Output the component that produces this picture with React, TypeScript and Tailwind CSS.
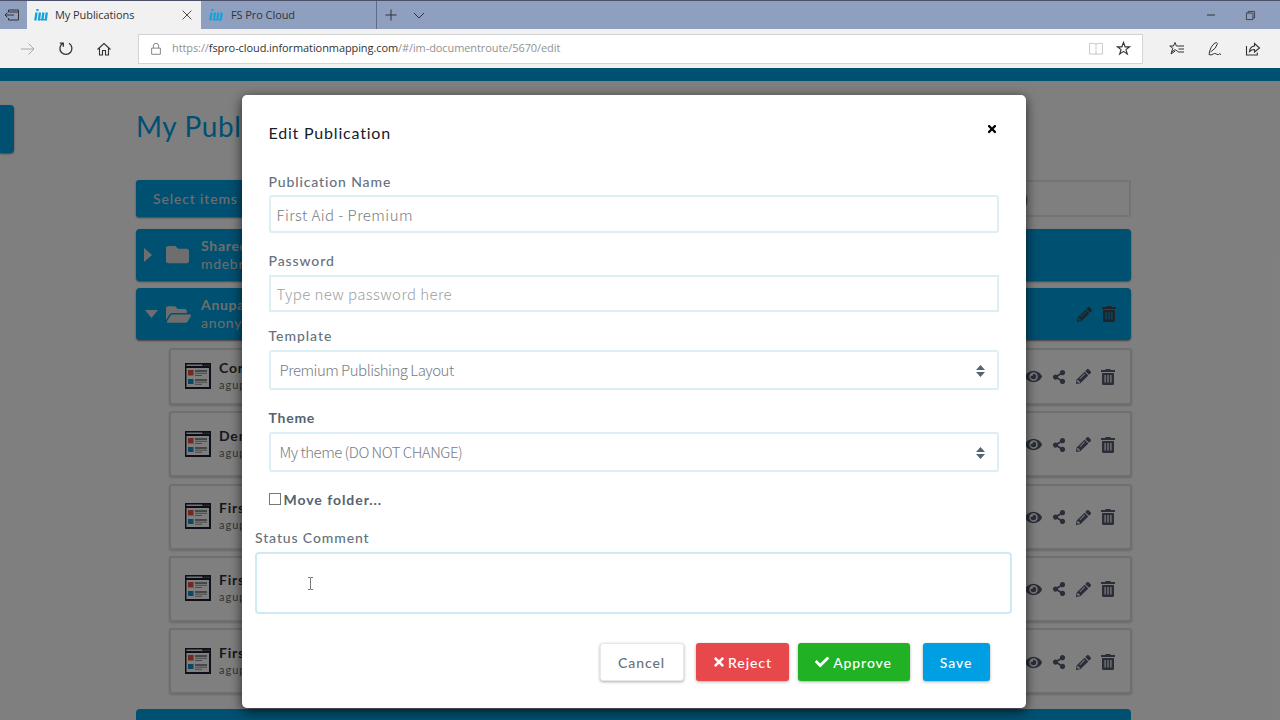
import type { ReactNode } from 'react';
import { FaCheck, FaEye, FaFolder, FaFolderOpen, FaPencilAlt, FaShareAlt, FaTimes } from 'react-icons/fa';

const documents = [
  { title: 'Corp', owner: 'agupta', box: 'h-[57px] pb-[2px]' },
  { title: 'Demo', owner: 'agupta', box: 'mt-[6px] h-[66px] pb-[1px]' },
  { title: 'First', owner: 'agupta', box: 'mt-[7px] h-[66px] pb-[2px]' },
  { title: 'First', owner: 'agupta', box: 'mt-[6px] h-[66px] pb-[2px]' },
  { title: 'First', owner: 'agupta', box: 'mt-[6px] h-[66px]' },
];

function BrandMark() {
  return (
    <svg width="14" height="12" viewBox="0 0 14 12" className="shrink-0" fill="none" stroke="#17a2dc" strokeWidth="2.300">
      <path d="M3.600 0 3.200 2" />
      <path d="M2.500 3.500 1.300 11.500M6 3.500 4.800 11.500M9.400 3.500 8.200 11.500M12.800 3.500 11.600 11.500" />
      <path d="M5 10.700h4M9 10.700h3" strokeWidth="1.300" />
    </svg>
  );
}

function Stroke({ size = 16, children, className = '' }: { size?: number; children: ReactNode; className?: string }) {
  return (
    <svg width={size} height={size} viewBox="0 0 16 16" fill="none" stroke="currentColor" strokeWidth="1" className={`shrink-0 ${className}`}>
      {children}
    </svg>
  );
}

function TrashIcon() {
  return (
    <svg width="14" height="16" viewBox="0 0 14 16" fill="currentColor">
      <path fillRule="evenodd" d="M4.500 0h5v1H14v2H0V1h4.500zM1 4h12v10.500q0 1.500-1.500 1.500h-9Q1 16 1 14.500zm2.500 2v7.500h1.200V6zm2.900 0v7.500h1.200V6zm2.900 0v7.500h1.200V6z" />
    </svg>
  );
}

function LayoutIcon() {
  return (
    <svg width="26" height="26" viewBox="0 0 26 26" className="shrink-0">
      <rect width="26" height="26" fill="#1c1f30" />
      <rect x="1.500" y="1.500" width="16" height="1.500" fill="#e8e8e8" />
      <path d="M19 2.300h1.300M21.200 2.300h1.300M23.300 2.300h1.200" stroke="#999" />
      <rect x="1.500" y="5" width="22.500" height="19" fill="#fff" />
      <rect x="3" y="7" width="5.500" height="5.500" fill="#e2553f" />
      <rect x="3" y="16" width="5.500" height="5" fill="#1593cb" />
      <path d="M10 8h12M10 17h12" stroke="#1c1f30" strokeWidth="1.200" />
      <path d="M10 10.300h12M10 12.500h7M10 19.200h12M10 21.300h7" stroke="#777" strokeWidth=".8" />
    </svg>
  );
}

function BrowserChrome() {
  return (
    <div className="h-[68px] bg-[#f1f1f1] font-['Open_Sans',sans-serif] text-[#333]">
      <div className="flex h-[29px] border-t border-[#4c5068] bg-[#8f9fbf] text-[11px] tracking-[-0.080px]">
        <div className="flex w-[27px] items-center justify-center pr-[3px]">
          <Stroke>
            <path d="M4.500 5V3h10v10h-10v-2M4.500 5h10M1 8h9M3.500 5.500 1 8l2.500 2.500" />
          </Stroke>
        </div>
        <div className="flex w-[174px] items-center bg-[#f1f1f1] pl-[7px]">
          <BrandMark />
          <span className="ml-[7px] w-[125px]">My Publications</span>
          <Stroke size={14}><path d="m3 3 10 10M13 3 3 13" /></Stroke>
        </div>
        <div className="flex w-[176px] items-center border-r border-[#606b88] pl-[8px]">
          <BrandMark />
          <span className="ml-[8px]">FS Pro Cloud</span>
        </div>
        <div className="flex flex-1 items-center pl-[6px]">
          <Stroke><path d="M8 2.500v11M2.500 8h11" /></Stroke>
          <Stroke className="ml-[12px]"><path d="m3 6 5 5 5-5" /></Stroke>
        </div>
        <div className="flex w-[77px] items-center gap-[25px]">
          <Stroke><path d="M4 8h8" /></Stroke>
          <Stroke size={13}><path d="M3 5h8v8H3zM5 5V3h8v8h-2" /></Stroke>
        </div>
      </div>
      <div className="flex h-[39px] items-center pl-[20px]">
        <Stroke className="text-[#a8a8a8]"><path d="M1 8h13M8.500 2.500 14 8l-5.500 5.500" /></Stroke>
        <Stroke className="ml-[22px]"><path strokeWidth="1.300" d="M11 2.300A6 6 0 1 1 4.500 2.500M1.800 2.200h3.500v3.500" /></Stroke>
        <Stroke className="ml-[22px]"><path strokeWidth="1.100" d="m1.500 8.500 6.500-6 6.500 6M3.500 7v7H6.500V9.500h3V14h3V7" /></Stroke>
        <div className="ml-[26px] flex h-[30px] w-[1005px] items-center border border-[#d4d4d4] bg-white pl-[10px]">
          <Stroke size={14} className="text-[#777]"><path d="M3 7h10v7H3zM5 7V4.500a3 3 0 0 1 6 0V7" /></Stroke>
          <div className="ml-[9px] w-[916px] text-[11px] tracking-[-0.090px] whitespace-nowrap text-[#929292]">
            https://<span className="text-[#333]">fspro-cloud.informationmapping.com</span>/#/im-documentroute/5670/edit
          </div>
          <Stroke className="text-[#cacaca]"><path d="M8 3v11M8 3Q5 1.500 1.500 2.500V13H8M8 3q3-1.500 6.500-.5V13H8" /></Stroke>
          <Stroke size={15} className="ml-[12px]"><path strokeWidth="1.200" d="m8 1.500 1.700 4.700h4.800l-3.900 3 1.500 4.800L8 11.100 3.900 14l1.500-4.800-3.900-3h4.800z" /></Stroke>
        </div>
        <Stroke className="ml-[26px]"><path d="M9 10.500 6 8.700l-3.500 2.500 1.300-4L.8 5h3.700L6 1.500 7.400 5H15M9.500 8H15M9 11h6M2.500 11.200 2 13l4-2.800" /></Stroke>
        <Stroke className="ml-[22px]"><path d="M2 13.500q1-8 6-11.500 2-1 2.500.500-1 5-7 8.500M2 13.500l2 .5 3.500-1.500q2 0 2.500 1 1.500.500 2.500-.700l1.500.700" /></Stroke>
        <Stroke className="ml-[22px]"><path strokeWidth="1.100" d="M1.500 5v9h10.800v-2.500M4.500 10.500q.5-5 5-5.500V2.500L14.500 7l-5 4V8.500q-3 0-5 2z" /></Stroke>
      </div>
    </div>
  );
}

function PublicationsPage() {
  return (
    <div className="h-full bg-white">
      <div className="h-[13px] bg-[#00a0e3]" />
      <div className="flex">
        <div className="mt-[24px] h-[48px] w-[14px] rounded-r bg-[#00a0e3] shadow-[0_1px_2px_#888]" />
        <div className="ml-[122px] w-[996px]">
          <h1 className="mt-[25px] h-[74px] text-[28px] leading-[40px] tracking-[0.600px] text-[#00a0e3]">My Publi</h1>
          <div className="flex h-[37px]">
            <div className="flex w-[200px] items-center rounded-[3px] bg-[#00a0e3] pl-[17px] text-[14px] font-medium tracking-[0.850px] text-[#ddd] shadow-[0_1px_2px_#888]">Select items</div>
            <div className="ml-[400px] flex w-[395px] items-center justify-end rounded-[2px] border-2 border-[#e0ebf4] pr-[101px] text-[16px] text-[#777]">)</div>
          </div>
          <div className="mt-[12px] flex h-[52px] w-[995px] items-center rounded-[4px] bg-[#00a0e3] pl-[7px] text-[#ddd] shadow-[0_1px_2px_#888]">
            <svg width="10" height="14" fill="currentColor"><path d="m1 0 8 7-8 7z" /></svg>
            <FaFolder className="mb-[2px] ml-[13px]" size={23} />
            <div className="ml-[12px] text-[14px] leading-[18px] tracking-[0.700px]">
              <p className="font-bold">Shared</p>
              <p>mdebru</p>
            </div>
          </div>
          <div className="mt-[7px] flex h-[52px] w-[995px] items-center rounded-[4px] bg-[#00a0e3] pl-[8px] text-[#ddd] shadow-[0_1px_2px_#888]">
            <svg width="14" height="8" fill="currentColor"><path d="M1 0h13L7.500 8z" /></svg>
            <FaFolderOpen className="ml-[8px]" size={25} />
            <div className="ml-[10px] text-[14px] leading-[18px] tracking-[0.700px]">
              <p className="font-bold">Anupa</p>
              <p>anony</p>
            </div>
            <div className="mr-[15px] ml-auto flex items-center gap-[10px] text-[#40484e]">
              <FaPencilAlt size={15} />
              <TrashIcon />
            </div>
          </div>
          <div className="mt-[8px] ml-[33px]">
            {documents.map((doc, i) => (
              <div key={i} className={`flex items-center rounded-[3px] border-2 border-[#dedede] bg-white pl-[14px] shadow-[0_1px_2px_#ccc] ${doc.box}`}>
                <LayoutIcon />
                <div className="ml-[8px] text-[#303038]">
                  <p className="text-[14px] leading-[18px] font-bold tracking-[0.800px]">{doc.title}</p>
                  <p className="text-[11px] leading-[16px] tracking-[1px] text-[#666]">{doc.owner}</p>
                </div>
                <div className="mt-[2px] mr-[15px] ml-auto flex items-center gap-[10px] text-[#565d73]">
                  <FaEye size={17} />
                  <FaShareAlt size={14} />
                  <FaPencilAlt size={15} />
                  <TrashIcon />
                </div>
              </div>
            ))}
          </div>
          <div className="mt-[15px] h-[52px] w-[995px] rounded-[4px] bg-[#00a0e3]" />
        </div>
      </div>
    </div>
  );
}

function SelectBox({ value }: { value: string }) {
  return (
    <div className="flex h-[40px] items-center justify-between rounded-[3px] border-2 border-[#dceff6] pr-[12px] pl-[9px] font-['Noto_Sans_CJK_SC',sans-serif] text-[15px] font-light tracking-[-0.500px] text-[#777d84]">
      {value}
      <svg width="9" height="12" className="mt-[2px]" fill="#536572"><path d="M4.500 0 9 5H0zM0 7h9l-4.500 5z" /></svg>
    </div>
  );
}

function EditDialog() {
  return (
    <div className="absolute top-[95px] left-[241.500px] h-[613px] w-[784px] rounded-[5px] bg-white px-[27px] text-[#66727c] shadow-[0_3px_12px_rgba(0,0,0,0.7)]">
      <div className="flex h-[76px] justify-between">
        <h2 className="mt-[26px] text-[16px] leading-[24px] tracking-[0.800px] text-[#18202b]">Edit Publication</h2>
        <FaTimes className="mt-[28px] mr-[0.500px] text-black" size={12} />
      </div>
      <label className="block h-[24px] text-[14px] leading-[21px] font-medium tracking-[0.870px]">Publication Name</label>
      <div className="flex h-[38px] items-center rounded-[3px] border-2 border-[#dceff3] pt-[2px] pl-[6px] font-['Noto_Sans_CJK_SC',sans-serif] text-[15px] font-light tracking-[0.450px] text-[#777d84]">First Aid - Premium</div>
      <label className="mt-[17px] block h-[25px] text-[14px] leading-[22px] font-medium tracking-[0.900px]">Password</label>
      <div className="flex h-[37px] items-center border-2 border-[#dceff3] pt-[2px] pl-[6px] font-['Noto_Sans_CJK_SC',sans-serif] text-[15px] font-light tracking-[0.400px] text-[#9b9fa3]">Type new password here</div>
      <label className="mt-[13px] block h-[25px] text-[14px] leading-[22px] font-medium tracking-[0.950px]">Template</label>
      <SelectBox value="Premium Publishing Layout" />
      <label className="mt-[17px] block h-[25px] text-[14px] leading-[22px] font-bold tracking-[0.750px] text-[#56636e]">Theme</label>
      <SelectBox value="My theme (DO NOT CHANGE)" />
      <label className="mt-[16px] flex h-[22px] items-center text-[14px] font-bold tracking-[0.950px] text-[#56636e]">
        <span className="mr-[3px] h-[12px] w-[12px] border border-[#777]" />
        Move folder...
      </label>
      <div className="mx-[-13.500px] mt-[17px]">
        <label className="block h-[25px] text-[14px] leading-[21px] font-medium tracking-[0.870px]">Status Comment</label>
        <div className="h-[62px] rounded-[4px] border-2 border-[#cfe9f5] pt-[23px] pl-[50px]">
          {/* text cursor */}
          <svg width="7" height="13" fill="none" stroke="#777"><path d="M1 .5h2l.5 1 .5-1h2M3.500 1v11M1 12.500h2l.5-1 .5 1h2" /></svg>
        </div>
      </div>
      <div className="mt-[29px] mr-[9px] flex h-[38px] justify-end text-[14px] font-medium tracking-[0.900px] text-white">
        <button className="w-[84px] rounded-[3px] border border-[#e8e8e8] bg-white text-[#66727c] shadow-[0_1px_3px_#aaa]">Cancel</button>
        <button className="ml-[12px] flex w-[93px] items-center justify-center gap-[4px] rounded-[3px] bg-[#e7484b] shadow-[0_1px_3px_#aaa]">
          <FaTimes size={14} className="mr-[-2px]" />Reject
        </button>
        <button className="ml-[9px] flex w-[112px] items-center justify-center gap-[4px] rounded-[3px] bg-[#20b224] shadow-[0_1px_3px_#aaa]">
          <FaCheck size={14} />Approve
        </button>
        <button className="ml-[13px] w-[67px] rounded-[3px] bg-[#009fe3] shadow-[0_1px_3px_#aaa]">Save</button>
      </div>
    </div>
  );
}

export default function App() {
  return (
    <div className="relative flex h-[720px] w-[1280px] flex-col overflow-hidden font-['Lato',sans-serif]">
      <BrowserChrome />
      <div className="relative h-[652px] overflow-hidden">
        <PublicationsPage />
        <div className="absolute inset-0 bg-black/50" />
      </div>
      <EditDialog />
    </div>
  );
}
